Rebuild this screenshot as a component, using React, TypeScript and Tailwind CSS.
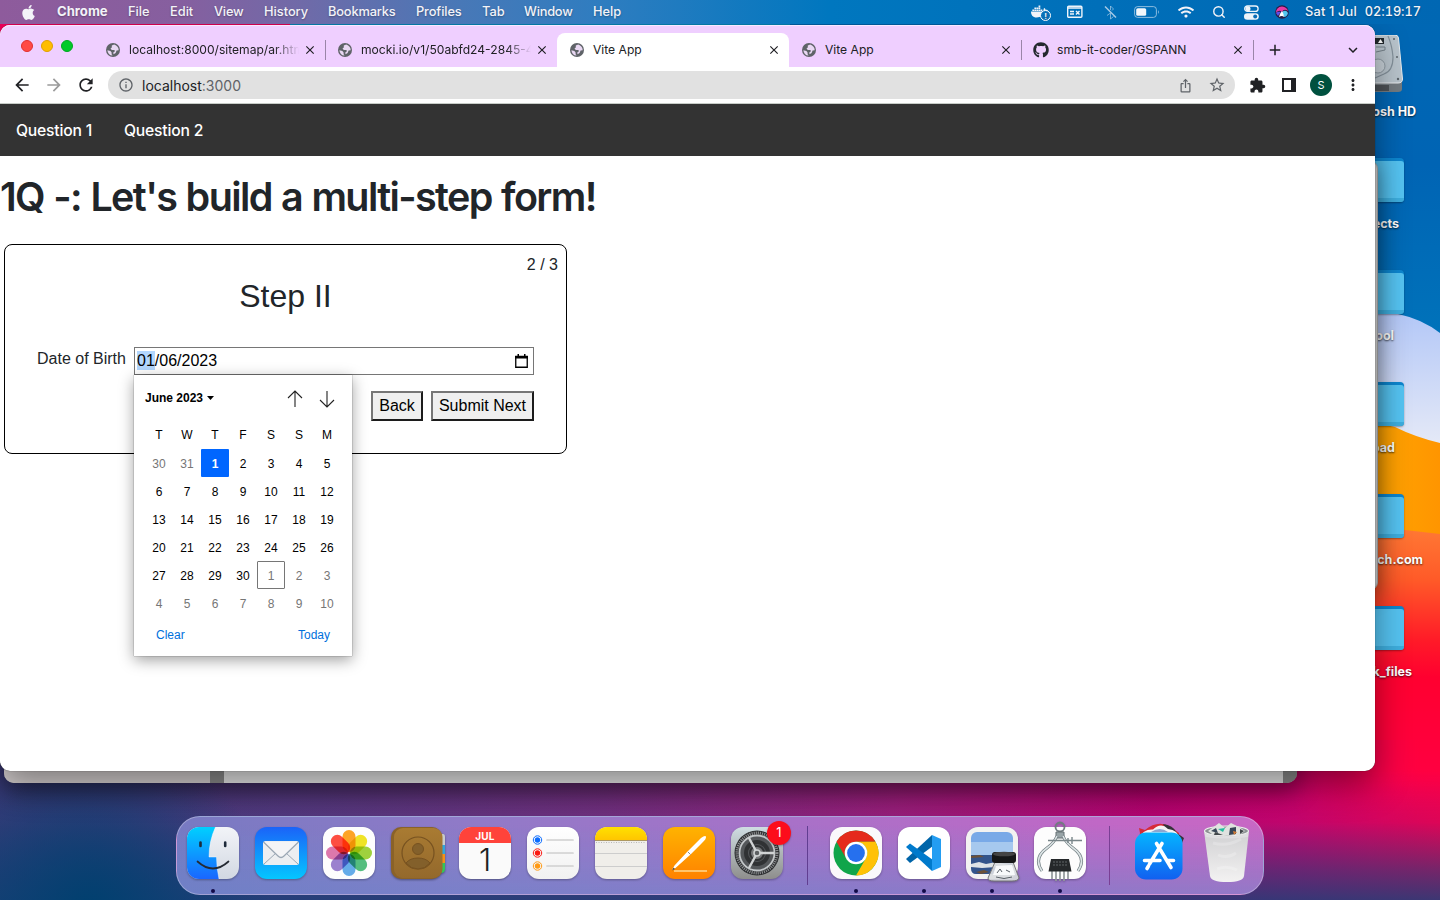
import React from "react";
import { FaApple, FaDocker, FaGithub, FaWifi } from "react-icons/fa";
import {
  MdArrowBack, MdArrowForward, MdRefresh, MdInfoOutline, MdIosShare, MdStarBorder,
  MdExtension, MdMoreVert, MdAdd, MdExpandMore, MdClose,
} from "react-icons/md";
import { Search } from "lucide-react";

const ui = "font-['Inter','Liberation_Sans',sans-serif]";
const arial = "font-['Liberation_Sans',Arial,sans-serif]";

function Wallpaper() {
  return (
    <svg className="absolute inset-0" width="1440" height="900" viewBox="0 0 1440 900">
      <defs>
        <linearGradient id="w-base" x1="0" x2="1">
          <stop offset="0" stopColor="#413a7a" />
          <stop offset=".2" stopColor="#55387e" />
          <stop offset=".42" stopColor="#742e7e" />
          <stop offset=".62" stopColor="#9e1c7a" />
          <stop offset=".8" stopColor="#bc006e" />
          <stop offset=".9" stopColor="#d0006c" />
          <stop offset="1" stopColor="#ee0054" />
        </linearGradient>
        <linearGradient id="w-low" x1="0" x2="0" y1="780" y2="900" gradientUnits="userSpaceOnUse">
          <stop offset="0" stopColor="#1d4078" stopOpacity="0" />
          <stop offset=".35" stopColor="#1d4078" stopOpacity=".08" />
          <stop offset=".75" stopColor="#1d4078" stopOpacity=".58" />
          <stop offset="1" stopColor="#1d4078" stopOpacity=".85" />
        </linearGradient>
        <radialGradient id="w-left" cx="90" cy="910" r="180" gradientUnits="userSpaceOnUse">
          <stop offset="0" stopColor="#00406f" />
          <stop offset="1" stopColor="#00406f" stopOpacity="0" />
        </radialGradient>
        <linearGradient id="w-right" x1="0" x2="0" y1="525" y2="830" gradientUnits="userSpaceOnUse">
          <stop offset="0" stopColor="#ff7a35" />
          <stop offset=".18" stopColor="#ff5a28" />
          <stop offset=".38" stopColor="#ff1a28" />
          <stop offset=".5" stopColor="#ff0030" />
          <stop offset=".8" stopColor="#ff0040" />
          <stop offset="1" stopColor="#ee0054" stopOpacity="0" />
        </linearGradient>
        <linearGradient id="w-fade" x1="1290" x2="1420" y1="0" y2="0" gradientUnits="userSpaceOnUse">
          <stop offset="0" stopColor="#000" />
          <stop offset="1" stopColor="#fff" />
        </linearGradient>
        <mask id="w-mask">
          <rect x="1290" y="740" width="150" height="160" fill="url(#w-fade)" />
          <rect x="1340" y="500" width="100" height="240" fill="#fff" />
        </mask>
        <linearGradient id="w-blue" x1="0" x2="0" y1="0" y2="330" gradientUnits="userSpaceOnUse">
          <stop offset="0" stopColor="#0068b4" />
          <stop offset=".5" stopColor="#0064b4" />
          <stop offset="1" stopColor="#0072ba" />
        </linearGradient>
        <linearGradient id="w-lav" x1="0" x2="0" y1="315" y2="440" gradientUnits="userSpaceOnUse">
          <stop offset="0" stopColor="#b4c8f7" />
          <stop offset="1" stopColor="#e3e8f7" />
        </linearGradient>
        <linearGradient id="w-org" x1="0" x2="1">
          <stop offset="0" stopColor="#ffae00" />
          <stop offset="1" stopColor="#ff9500" />
        </linearGradient>
      </defs>
      <rect width="1440" height="900" fill="url(#w-base)" />
      <rect width="292" height="40" fill="#f3005c" />
      <rect x="290" width="500" height="40" fill="#078cc2" />
      <rect x="790" width="650" height="400" fill="url(#w-blue)" />
      <path d="M1340 305 L1398 314 Q1422 319 1440 333 V480 H1340Z" fill="url(#w-lav)" />
      <path d="M1340 415 L1395 427 Q1415 437 1440 443 V560 H1340Z" fill="url(#w-org)" />
      <path d="M1290 529 L1405 530 L1440 534 V830 H1290Z" fill="url(#w-right)" mask="url(#w-mask)" />
      <rect y="780" width="1440" height="120" fill="url(#w-low)" />
      <rect y="700" width="300" height="200" fill="url(#w-left)" />
    </svg>
  );
}

function HardDrive() {
  return (
    <svg width="70" height="60" viewBox="0 0 70 60">
      <path d="M10 46 H62 V54 Q62 57 58 57 H14 Q10 57 10 54Z" fill="#747b80" />
      <path d="M12 0 H55 Q58 0 58.500 3 L62.500 44 Q62.500 48 58 48 H10Z" fill="#b9c4cc" stroke="#e9edf0" strokeWidth="1" />
      <rect x="34" y="3" width="10" height="6" fill="#22282c" />
      <path d="M38 8 l2.500 -4 l2.500 4z" fill="#fff" />
      <path d="M36 12 H45 V15 L36 17" fill="none" stroke="#77838c" />
      <path d="M48 1 Q52 10 53 22 Q53 36 44 39 L35 43" fill="none" stroke="#84919b" strokeWidth="1.200" />
      <circle cx="38" cy="31" r="7" fill="#c8d1d8" stroke="#8f9ba4" />
      <circle cx="54" cy="4" r="1" fill="#5c656b" />
      <circle cx="57" cy="22" r="1" fill="#5c656b" />
      <circle cx="58" cy="44" r="1.200" fill="#5c656b" />
      <path d="M36 50v6M38 50v6M40 50v6M42 50v6M44 50v6M46 50v6M48 50v6" stroke="#26292b" />
    </svg>
  );
}

function Folder() {
  return (
    <div className="h-[44px] w-[64px] rounded-[4px] bg-[#0d86cf] pt-[3px] shadow-[0_1px_2px_rgba(0,0,0,.35)]">
      <div className="h-[41px] rounded-[3px] border-b-4 border-[#3eaede] bg-[#55c3f1]" />
    </div>
  );
}

const labels = [
  { t: "osh HD", c: "pr-[24px]" },
  { t: "ects", c: "pr-[41px]" },
  { t: "ool", c: "pr-[46px]" },
  { t: "oad", c: "pr-[45px]" },
  { t: "ech.com", c: "pr-[17px]" },
  { t: "k_files", c: "pr-[28px]" },
];

function DesktopItems() {
  return (
    <div className="absolute left-[1340px] top-[24px] flex w-[100px] flex-col">
      {labels.map((l, i) => (
        <div key={l.t} className="flex h-28 flex-col">
          <div className={i === 0 ? "flex h-[80px] pt-[11px]" : "flex h-[80px] pt-[22px]"}>
            {i === 0 ? <HardDrive /> : <Folder />}
          </div>
          <div className={`${l.c} text-right text-[12.5px] font-bold leading-4 whitespace-nowrap text-white [text-shadow:0_1px_2px_rgba(0,0,0,.7)]`}>
            {l.t}
          </div>
        </div>
      ))}
    </div>
  );
}

const menus = [
  { t: "Chrome", c: "w-[71px] font-bold text-[13.1px]" },
  { t: "File", c: "w-[42px]" },
  { t: "Edit", c: "w-[44px]" },
  { t: "View", c: "w-[50px] tracking-[-.2px]" },
  { t: "History", c: "w-[64px]" },
  { t: "Bookmarks", c: "w-[88px] tracking-[-.15px]" },
  { t: "Profiles", c: "w-[66px] tracking-[-.1px]" },
  { t: "Tab", c: "w-[42px]" },
  { t: "Window", c: "w-[69px] tracking-[-.2px]" },
  { t: "Help", c: "w-[60px]" },
];

function MenuBar() {
  return (
    <div className="absolute left-0 top-0 flex h-6 w-[1440px] items-center bg-[linear-gradient(90deg,#8e5b9c_0,#865f9f_180px,#706aa8_300px,#4878b7_460px,#2f7dc0_600px,#0077bf_830px,#006fb9_1100px,#0067b3_1440px)] text-[12.8px] font-medium text-[#f3f3f8] [text-shadow:0_1px_2px_rgba(0,0,0,.3)]">
      <div className="flex w-[57px] pl-[20px]"><FaApple size={17} /></div>
      {menus.map((m) => (
        <div key={m.t} className={`${m.c} shrink-0 whitespace-nowrap`}>{m.t}</div>
      ))}
      <div className="ml-auto flex items-center pr-[19px]">
        <div className="relative mr-[16px] h-5 w-[20px]">
          <FaDocker size={17} className="absolute left-0 top-[1px]" />
          <div className="absolute left-[9px] top-[8px] flex size-[11px] items-center justify-center rounded-full border-[1.5px] border-white bg-[#0a71b8] text-[8px] font-bold leading-none">!</div>
        </div>
        <svg width="16" height="14" viewBox="0 0 16 14" className="mr-[20px]">
          <rect x=".7" y="1.200" width="14.200" height="11" rx="1" fill="none" stroke="#eef4fa" strokeWidth="1.400" />
          <path d="M1 3H15M3 6.500H7M3 9H7M9 6L12.500 9.500M12.500 6L9 9.500" stroke="#eef4fa" strokeWidth="1.400" />
        </svg>
        <svg width="15" height="15" viewBox="0 0 15 15" fill="none" stroke="#a9cbe6" className="mr-[16px]">
          <path d="M2 1.500L13 12.500" strokeWidth="1.400" />
          <path d="M7.500 5V1L10.500 4L9 5.500M4 10.500L7.500 8V14L10.500 11.500" strokeWidth=".9" opacity=".8" />
        </svg>
        <svg width="26" height="12" viewBox="0 0 26 12" className="mr-[18px]">
          <rect x=".6" y=".6" width="21.800" height="10.800" rx="3" fill="none" stroke="#b9d6ec" strokeOpacity=".75" />
          <rect x="2.200" y="2.200" width="10" height="7.600" rx="1.600" fill="#f2f7fb" />
          <path d="M24 4 Q25.500 6 24 8Z" fill="#b9d6ec" />
        </svg>
        <FaWifi size={16} className="mr-[18px]" />
        <Search size={14} strokeWidth={2.4} className="mr-[18px]" />
        <svg width="15" height="15" viewBox="0 0 15 15" className="mr-[16px]">
          <rect x=".7" y="1" width="13.400" height="5.400" rx="2.700" fill="none" stroke="#eef4fa" strokeWidth="1.300" />
          <circle cx="4" cy="3.700" r="2.500" fill="#eef4fa" />
          <rect x="0" y="8.200" width="14.800" height="6.600" rx="3.300" fill="#eef4fa" />
          <circle cx="11.200" cy="11.500" r="2" fill="#0a6cb6" />
        </svg>
        <svg width="14" height="14" viewBox="0 0 14 14" className="mr-[16px]">
          <circle cx="7" cy="7" r="6.800" fill="#2a1d45" />
          <path d="M1 8 Q1 2 7 1.500 Q12 2 13 6 Q9 3 7 7 Q4 4 1 8Z" fill="#e83aa6" />
          <path d="M7 7 Q11 4 13 8 Q12 12 9 12Z" fill="#54c6ef" />
          <path d="M7 6 Q9 9 9 12 Q7 10 4 12 Q5 8 7 6Z" fill="#fff" />
          <path d="M1 8 Q3 6 6 7 Q4 9 3 11Z" fill="#5c50e8" />
        </svg>
        <div className="flex gap-[8px] text-[12.8px] leading-6 whitespace-nowrap">
          <span className="tracking-[.15px]">Sat 1 Jul</span>
          <span className="tracking-[-.05px] tabular-nums">02:19:17</span>
        </div>
      </div>
    </div>
  );
}

function GlobeIcon() {
  return (
    <svg width="14" height="14" viewBox="0 0 14 14" className="shrink-0">
      <circle cx="7" cy="7" r="7" fill="#5f6368" />
      <path d="M8.200 1.600 L5.800 2.600 V4.400 L4.500 5.600 L5.800 7 H8.600 V8.800 L7.200 9.600 L7.600 11.200 L9.600 10 L10.600 7.600 L12.700 7.200 Q12.600 3.200 8.200 1.600Z M1.400 7.200 L4.400 8 L5.600 9.400 V11.200 L6.600 12.600 Q1.800 12.200 1.400 7.200Z" fill="#e9d8f3" />
    </svg>
  );
}

function Tab({ title, active, github, line, fade }: { title: string; active?: boolean; github?: boolean; line?: boolean; fade?: boolean }) {
  return (
    <div className={`relative flex h-[34px] w-[232px] shrink-0 items-center pl-[13px] ${active ? "rounded-t-[8px] bg-white" : ""}`}>
      {github ? <FaGithub size={16} color="#24292f" className="-ml-px -mr-px shrink-0" /> : <GlobeIcon />}
      <div className={`ml-[9px] w-[172px] whitespace-nowrap text-[12.1px] text-[#202124] ${fade ? "[mask-image:linear-gradient(90deg,#000_145px,transparent_170px)]" : ""}`}>{title}</div>
      <MdClose size={14} color="#1f1f24" className="ml-[2px] shrink-0" />
      {line && <div className="absolute right-[-1px] top-[7px] h-[20px] w-px bg-[#9a85a8]" />}
    </div>
  );
}

function Calendar() {
  const days = [30, 31, ...Array.from({ length: 30 }, (_, i) => i + 1), ...Array.from({ length: 10 }, (_, i) => i + 1)];
  return (
    <div className={`${arial} absolute left-[134px] top-[350px] h-[281px] w-[218px] bg-white px-[11px] text-[12px] text-black shadow-[0_4px_14px_rgba(0,0,0,.38),0_0_1px_rgba(0,0,0,.6)]`}>
      <div className="flex h-[46px] items-center">
        <div className="flex items-center font-bold">June 2023
          <svg width="7" height="4" viewBox="0 0 7 4" className="ml-[4px]"><path d="M0 0H7L3.500 4Z" /></svg>
        </div>
        <div className="-mr-[2px] ml-auto mt-[2px] flex">
          {[0, 1].map((i) => (
            <svg key={i} width="32" height="18" viewBox="0 0 32 18" fill="none" stroke="#222" strokeWidth="1.100" className={i ? "rotate-180" : ""}>
              <path d="M16 1V17M9 8L16 1L23 8" />
            </svg>
          ))}
        </div>
      </div>
      <div className="grid h-[28px] grid-cols-[repeat(7,28px)] items-center text-center">
        {["T", "W", "T", "F", "S", "S", "M"].map((d, i) => <div key={i}>{d}</div>)}
      </div>
      <div className="grid grid-cols-[repeat(7,28px)] text-center leading-[28px]">
        {days.map((d, i) => (
          <div key={i} className={i === 2 ? "h-[28px] rounded-[1px] bg-[#0066ff] pt-px font-bold text-white" : i === 32 ? "h-[28px] rounded-[1px] border border-[#767676] leading-[28px] text-[#767676]" : i < 2 || i > 31 ? "h-[28px] pt-px text-[#767676]" : "h-[28px] pt-px"}>{d}</div>
        ))}
      </div>
      <div className="flex justify-between px-[11px] pt-[9px] text-[#0070dc]">
        <span>Clear</span><span>Today</span>
      </div>
    </div>
  );
}

function FormCard() {
  return (
    <div className={`${arial} ml-1 mt-[24px] h-[210px] w-[563px] rounded-[8px] border border-black text-[16px] text-[#212529]`}>
      <div className="pr-[8px] pt-[8px] text-right leading-6">2 / 3</div>
      <div className="text-center text-[32px] leading-[38px]">Step II</div>
      <div className="mt-[32px] flex pl-[32px]">
        <div className="w-[97px] leading-[24px] whitespace-nowrap">Date of Birth</div>
        <div className="flex h-[28px] w-[400px] items-center border border-[#767676] bg-white pl-[2px] pr-[5px] text-black">
          <div className="leading-[20px]"><span className="bg-[#b3d7fe] py-px">01</span>/06/2023</div>
          <svg width="13" height="14" viewBox="0 0 13 14" className="ml-auto">
            <path d="M.75 2.500H12.250V13.250H.75Z" fill="none" stroke="#000" strokeWidth="1.300" />
            <path d="M0 2H13V4.500H0ZM2.500 0H4V3H2.500ZM9 0H10.500V3H9Z" />
          </svg>
        </div>
      </div>
      <div className="mt-[16px] flex justify-end gap-2 pr-[32px] text-black">
        <button className="h-[30px] w-[52px] border-2 border-b-[#1c1c1c] border-l-[#767676] border-r-[#1c1c1c] border-t-[#767676] bg-[#efefef]">Back</button>
        <button className="h-[30px] w-[103px] border-2 border-b-[#1c1c1c] border-l-[#767676] border-r-[#1c1c1c] border-t-[#767676] bg-[#efefef] whitespace-nowrap">Submit Next</button>
      </div>
    </div>
  );
}

function BrowserWindow() {
  return (
    <div className="absolute left-0 top-[25px] flex h-[746px] w-[1375px] flex-col rounded-[10px] bg-white shadow-[0_14px_34px_rgba(0,0,0,.42),0_0_1px_rgba(0,0,0,.8)]">
      <div className="flex h-[42px] items-end rounded-t-[10px] bg-[#efcfff] shadow-[inset_0_1px_0_#f8e8ff]">
        <div className="flex h-[42px] w-[93px] shrink-0 items-center gap-2 pl-[21px]">
          <div className="size-3 rounded-full border border-[#e0302e] bg-[#ff4a46]" />
          <div className="size-3 rounded-full border border-[#dfa000] bg-[#ffbd00]" />
          <div className="size-3 rounded-full border border-[#00a820] bg-[#00ca28]" />
        </div>
        <Tab title="localhost:8000/sitemap/ar.htm" line fade />
        <Tab title="mocki.io/v1/50abfd24-2845-4" fade />
        <Tab title="Vite App" active />
        <Tab title="Vite App" line />
        <Tab title="smb-it-coder/GSPANN" github line />
        <div className="flex h-[34px] flex-1 items-center justify-between pl-[13px] pr-[13px]">
          <MdAdd size={18} color="#1f1f24" />
          <MdExpandMore size={18} color="#1f1f24" />
        </div>
      </div>
      <div className="flex h-[36px] shrink-0 items-center pl-[6px] text-[#202124]">
        <div className="flex w-8 justify-center"><MdArrowBack size={20} /></div>
        <div className="flex w-8 justify-center text-[#9b9b9b]"><MdArrowForward size={20} /></div>
        <div className="flex w-8 justify-center"><MdRefresh size={20} /></div>
        <div className="ml-[6px] flex h-[28px] w-[1127px] items-center rounded-full bg-[#e1e1e1] pl-[10px] pr-[2px]">
          <MdInfoOutline size={16} color="#5f6368" />
          <div className="ml-[8px] text-[14px]">localhost<span className="text-[#5f6368]">:3000</span></div>
          <div className="ml-auto flex items-center text-[#5f6368]">
            <div className="flex w-8 justify-center"><MdIosShare size={15} /></div>
            <div className="flex w-8 justify-center"><MdStarBorder size={18} /></div>
          </div>
        </div>
        <div className="ml-[6px] flex items-center">
          <div className="flex w-8 justify-center"><MdExtension size={17} /></div>
          <div className="flex w-8 justify-center"><div className="h-[14px] w-[14px] border-2 border-r-[5px] border-[#202124]" /></div>
          <div className="flex w-8 justify-center"><div className="flex size-[22px] items-center justify-center rounded-full bg-[#00513f] text-[11px] text-white">S</div></div>
          <div className="flex w-8 justify-center"><MdMoreVert size={18} /></div>
        </div>
      </div>
      <div className="flex h-[53px] shrink-0 items-center gap-[32px] border-t border-[#c8cdc8] bg-[#333] pl-4 pt-[2px] text-[15.7px] font-medium tracking-[-.2px] text-white">
        <span className="w-[76px] whitespace-nowrap">Question 1</span><span className="whitespace-nowrap">Question 2</span>
      </div>
      <h1 className="mt-[16px] h-[48px] text-[39.5px] font-semibold leading-[51px] tracking-[-1.62px] [word-spacing:1px] whitespace-nowrap text-[#212529]">1Q -: Let's build a multi-step form!</h1>
      <FormCard />
      <Calendar />
    </div>
  );
}

function Tile({ bg, children }: { bg: string; children?: React.ReactNode }) {
  return (
    <svg width="52" height="52" viewBox="0 0 52 52" className="overflow-visible drop-shadow-[0_1px_1px_rgba(0,0,0,.3)]">
      <rect width="52" height="52" rx="12" fill={bg} />
      {children}
    </svg>
  );
}

function DockDefs() {
  const g: [string, string, string][] = [
    ["g-mail", "#1b63f8", "#05c6ff"], ["g-white", "#ffffff", "#f1f1f1"], ["g-pages", "#ffb300", "#ff8200"],
    ["g-prefs", "#cfdde2", "#8e8e8c"], ["g-store", "#05b4ff", "#1160f0"], ["g-fl", "#00d0ff", "#1a66ff"],
    ["g-fr", "#f2f4f8", "#d2d8e2"], ["g-brown", "#a97b32", "#94692c"], ["g-yel", "#ffe100", "#ffc500"], ["g-bin", "#d0d0d2", "#f3f2f2"],
  ];
  return (
    <svg width="0" height="0" className="absolute">
      <defs>
        {g.map(([id, a, b]) => (
          <linearGradient key={id} id={id} x1="0" x2="0" y1="0" y2="1"><stop stopColor={a} /><stop offset="1" stopColor={b} /></linearGradient>
        ))}
        <clipPath id="tile"><rect width="52" height="52" rx="12" /></clipPath>
      </defs>
    </svg>
  );
}

const Finder = () => (
  <Tile bg="url(#g-fr)">
    <g clipPath="url(#tile)">
      <path d="M0 0H28.500Q22 14 22 30H29.500Q29.500 41 32 52H0Z" fill="url(#g-fl)" />
      <path d="M28.500 0Q22 14 22 30H29.500Q29.500 41 32 52" fill="none" stroke="#fff" strokeOpacity=".55" strokeWidth=".8" />
    </g>
    <path d="M13.500 15.500V19M38.200 15.500V19" stroke="#1d2a3a" strokeWidth="2.600" strokeLinecap="round" />
    <path d="M10.500 34.500Q26 48.500 41.500 34.500" fill="none" stroke="#252a33" strokeWidth="1.700" strokeLinecap="round" />
  </Tile>
);

const Mail = () => (
  <Tile bg="url(#g-mail)">
    <rect x="8" y="14" width="36" height="24" rx="2.500" fill="#eceef1" />
    <path d="M9 37L21 26M43 37L31 26" stroke="#9ba7b4" strokeWidth="1" />
    <path d="M8.500 15L23 29Q26 32 29 29L43.500 15" fill="#f4f4f6" stroke="#9ba7b4" strokeWidth="1.200" />
  </Tile>
);

const Photos = () => (
  <Tile bg="#fdfdfd">
    {["#ff9500", "#eee000", "#8fcb1b", "#37b56a", "#4ba0e8", "#8b6cc8", "#d862a0", "#ff2f20"].map((c, i) => (
      <rect key={c} x="19.500" y="3" width="13" height="22" rx="6.500" fill={c} fillOpacity=".85" transform={`rotate(${i * 45} 26 26)`} className="mix-blend-multiply" />
    ))}
  </Tile>
);

const Contacts = () => (
  <svg width="54" height="52" viewBox="0 0 54 52" className="drop-shadow-[0_1px_1px_rgba(0,0,0,.4)]">
    <path d="M48 7H52Q54 7 54 10V18H48Z" fill="#c9ccca" /><path d="M48 18H54V27H48Z" fill="#31a6dc" />
    <path d="M48 27H54V36H48Z" fill="#f49018" /><path d="M48 36H54V42Q54 46 50 46H48Z" fill="#32c659" />
    <rect y="0" width="51" height="52" rx="10" fill="#8a6228" />
    <rect x="3" y="1" width="48.500" height="50" rx="9" fill="url(#g-brown)" />
    <circle cx="27" cy="26" r="16" fill="none" stroke="#775220" strokeWidth="1.200" />
    <circle cx="27" cy="22" r="5.500" fill="#83602b" stroke="#775220" />
    <path d="M15 36Q19 31 27 31Q35 31 39 36Q34 42 27 42Q20 42 15 36Z" fill="#83602b" stroke="#775220" />
  </svg>
);

const CalendarApp = () => (
  <div className="flex h-[52px] w-[52px] flex-col items-center overflow-hidden rounded-[12px] bg-[#fafafa] shadow-[0_1px_2px_rgba(0,0,0,.35)]">
    <div className="flex h-[16px] w-full shrink-0 items-center justify-center bg-[#ff433a] pt-[2px] text-[10px] font-bold tracking-[.2px] text-white">JUL</div>
    <div className="text-[31px] font-light leading-[33px] text-[#202020]">1</div>
  </div>
);

const Reminders = () => (
  <Tile bg="url(#g-white)">
    {["#0a6cff", "#fb1a12", "#ff9a14"].map((c, i) => (
      <g key={c}>
        <circle cx="10.500" cy={13 + i * 13} r="4.200" fill="none" stroke={c} strokeWidth="1" />
        <circle cx="10.500" cy={13 + i * 13} r="2.700" fill={c} />
        <path d={`M20 ${13 + i * 13}H46`} stroke="#cfcfcf" strokeWidth="1.700" strokeLinecap="round" />
      </g>
    ))}
  </Tile>
);

const Notes = () => (
  <Tile bg="#f0eeea">
    <g clipPath="url(#tile)"><rect width="52" height="13" fill="url(#g-yel)" /></g>
    <path d="M0 13.500H52" stroke="#ad9860" /><path d="M1 15.500H51" stroke="#b8b8b8" strokeDasharray="1 1.500" />
    <path d="M0 26.500H52M0 39.500H52" stroke="#cdcdcd" />
  </Tile>
);

const Pages = () => (
  <Tile bg="url(#g-pages)">
    <path d="M11 44H44" stroke="#ffd890" strokeWidth="1.600" />
    <path d="M9 43L11.500 38.500L24 25L38 11Q42 8 43 9.500Q43.500 12 39 16L27 28L12.500 41Z" fill="#fff" />
    <path d="M25 25L27.500 27.500" stroke="#8a8a8a" /><path d="M9 43.500L10.500 40.500L12 42Z" fill="#4b4b4b" />
  </Tile>
);

const Prefs = () => (
  <div className="relative">
    <Tile bg="url(#g-prefs)">
      <circle cx="26" cy="26" r="22.500" fill="#2b2d2f" />
      <circle cx="26" cy="26" r="20" fill="none" stroke="#8b8d8f" strokeWidth="3" strokeDasharray="1.100 1" />
      <circle cx="26" cy="26" r="17.500" fill="#54575a" stroke="#c2c6c8" strokeWidth="1.800" />
      <circle cx="26" cy="26" r="11" fill="none" stroke="#303234" strokeWidth="4" />
      <circle cx="26" cy="26" r="7" fill="#77797b" stroke="#303234" strokeWidth="2" />
      <path d="M28 26H43M25 24L18 11M25 28L18 41" stroke="#d0d3d4" strokeWidth="2.400" />
      <circle cx="26" cy="26" r="3" fill="#5d6062" stroke="#d0d3d4" strokeWidth="1.500" />
    </Tile>
    <div className="absolute left-[36px] top-[-6px] flex size-[24px] items-center justify-center rounded-full bg-[#fc0d1b] text-[13px] text-white shadow-[0_1px_2px_rgba(0,0,0,.3)]">1</div>
  </div>
);

const Chrome = () => (
  <Tile bg="#faf8fb">
    <circle cx="26" cy="26" r="22.500" fill="#10a54a" />
    <path d="M6.500 14.750A22.500 22.500 0 0 1 45.500 14.750H26A11.250 11.250 0 0 0 16.250 31.600Z" fill="#e52a1c" />
    <path d="M45.500 14.750A22.500 22.500 0 0 1 26 48.500L35.750 31.600A11.250 11.250 0 0 0 26 14.750Z" fill="#ffc107" />
    <circle cx="26" cy="26" r="11.300" fill="#fff" /><circle cx="26" cy="26" r="8.900" fill="#2670ee" />
  </Tile>
);

const Code = () => (
  <Tile bg="#fff">
    <path d="M34 8L8 32L12 36L35 19Z" fill="#0065a9" />
    <path d="M34 44L8 20L12 16.500L35 33Z" fill="#007acc" />
    <path d="M34 8L43 12V40L34 44V8Z" fill="#239df2" />
  </Tile>
);

const Preview = () => (
  <Tile bg="#f3f2f1">
    <rect x="5" y="5" width="42" height="42" rx="6" fill="#79a9e7" />
    <path d="M5 15H47V28H5Z" fill="#a6c8ee" /><path d="M5 28H47V47H10Q5 47 5 41Z" fill="#34558b" />
    <path d="M5 37L13 35L20 37L30 35L47 39V42L30 40L16 41L5 40Z" fill="#dfe4e6" />
    <path d="M5 29L14 28L18 30L5 31ZM10 45L18 43L23 45L15 47Z" fill="#6c5138" />
    <path d="M29 35H47L53 51Q52 54 46 54H28Q22 54 22 51Z" fill="#d9dcdf" fillOpacity=".92" stroke="#777" />
    <path d="M30 39L46 38L49 48H27Z" fill="#f8fafb" /><path d="M31 46L34 42L36 45M40 43L44 45M30 50Q38 53 46 50" fill="none" stroke="#596067" />
    <rect x="26" y="25" width="24" height="11" rx="3" fill="#161718" /><ellipse cx="38" cy="27" rx="11" ry="2.300" fill="#444" />
  </Tile>
);

const SysInfo = () => (
  <Tile bg="#fdfdfd">
    <circle cx="26" cy="0" r="4.500" fill="none" stroke="#707c80" strokeWidth="1.800" />
    <path d="M22 5H30V11H22Z" fill="#98a4a7" stroke="#667175" />
    <path d="M23 9Q20 16 13 21Q-1 31 8 44M29 9Q32 16 39 21Q53 31 44 44" fill="none" stroke="#6f7c80" strokeWidth="3" />
    <path d="M23 9Q20 16 13 21Q-1 31 8 44M29 9Q32 16 39 21Q53 31 44 44" fill="none" stroke="#dce4e5" strokeWidth="1.600" />
    <path d="M14 13.500H48M38 10V17M34 11V16" stroke="#788589" strokeWidth="1.400" />
    <path d="M18 44V52M22 44V54M26 44V54M30 44V54M34 44V52" stroke="#92989b" strokeWidth="1.700" />
    <path d="M17 32H35L37.500 44.500H14.500Z" fill="#25282a" /><path d="M19 35H33M19 38H34" stroke="#606466" strokeDasharray="2 1" />
  </Tile>
);

const AppStore = () => (
  <svg width="52" height="56" viewBox="0 0 52 56" className="overflow-visible">
    <path d="M5 9L4 4L10 6Q23 -5 36 3L44 9V14H4Z" fill="#d72a37" />
    <path d="M28 0Q38 1 42 9L49 14L47 19H38Z" fill="#34333b" />
    <path d="M4 14Q8 5 18 5.500Q26 -2 33 5Q43 6 45 15Z" fill="#f4f3f5" />
    <path d="M16 8Q25 2 33 8Z" fill="#8fa6cf" />
    <rect x="0" y="8.500" width="47.500" height="47" rx="11" fill="url(#g-store)" />
    <path d="M27 19.500L14.500 40M21.500 19.500L36 43.500M9.500 36.500H25M33 36.500H38.500M13.500 42L12 44.500" stroke="#fff" strokeWidth="3.600" strokeLinecap="round" />
  </svg>
);

const Trash = () => (
  <svg width="48" height="62" viewBox="0 0 48 62" className="overflow-visible">
    <path d="M1 8H46L41 53Q40 59 24 59Q8 59 7 53Z" fill="url(#g-bin)" />
    <ellipse cx="23.500" cy="8" rx="22" ry="5" fill="#8d9294" stroke="#eee" strokeWidth="1.200" />
    <path d="M5 8L12 3L16 0L22 5L28 0L36 4L42 8L36 12L27 12L20 13L9 11Z" fill="#dfe2df" />
    <path d="M8 8L13 5L15 10ZM27 5L33 4L33 11L26 12Z" fill="#384657" /><path d="M15 6L22 5L20 9Z" fill="#23bd9e" />
    <path d="M30 8L34 9L31 12Z" fill="#d27b36" /><path d="M12 9L20 12L11 12ZM37 6L41 8L37 11Z" fill="#42474b" />
    <path d="M1.500 10Q22 18 45.500 10L45 14Q24 17 2.500 14Z" fill="#e6e6e7" fillOpacity=".6" />
    <path d="M10 20Q24 24 38 16M15 32Q24 36 33 30M14 46Q24 42 34 47" fill="none" stroke="#fff" strokeOpacity=".22" strokeWidth="3" />
  </svg>
);

function DockItem({ children, run }: { children: React.ReactNode; run?: boolean }) {
  return (
    <div className="relative h-[52px] w-[52px] shrink-0">
      {children}
      {run && <div className="absolute left-[24px] top-[62px] size-1 rounded-full bg-[#120a48]" />}
    </div>
  );
}

function Dock() {
  return (
    <div className="absolute left-[176px] top-[816px] flex h-[79px] w-[1088px] gap-4 rounded-[24px] border border-white/30 bg-[linear-gradient(0deg,rgba(104,134,202,.55),rgba(104,134,202,0)_90%),linear-gradient(90deg,#787ac2,#917ac8_28%,#ab70c8_60%,#c068c6_85%,#c868c4)] pl-[10px] pt-[10px]">
      <DockDefs />
      <DockItem run><Finder /></DockItem>
      <DockItem><Mail /></DockItem>
      <DockItem><Photos /></DockItem>
      <DockItem><Contacts /></DockItem>
      <DockItem><CalendarApp /></DockItem>
      <DockItem><Reminders /></DockItem>
      <DockItem><Notes /></DockItem>
      <DockItem><Pages /></DockItem>
      <DockItem><Prefs /></DockItem>
      <div className="ml-[8px] mr-[6px] mt-[-1px] h-[59px] w-px bg-[#613e91]" />
      <DockItem run><Chrome /></DockItem>
      <DockItem run><Code /></DockItem>
      <DockItem run><Preview /></DockItem>
      <DockItem run><SysInfo /></DockItem>
      <div className="ml-[7px] mr-[9px] mt-[-1px] h-[59px] w-px bg-[#7a3f95]" />
      <div className="-mt-[3px] w-[52px]"><AppStore /></div>
      <div className="-mt-[4px] w-[48px]"><Trash /></div>
    </div>
  );
}

export default function App() {
  return (
    <div className={`${ui} relative h-[900px] w-[1440px] overflow-hidden`}>
      <Wallpaper />
      <DesktopItems />
      <div className="absolute left-[1300px] top-[160px] h-[431px] w-[78px] rounded-[9px] border border-[#a5a5a5] bg-[#cfcfcf] shadow-[0_6px_20px_rgba(0,0,0,.35)]" />
      <div className="absolute left-[4px] top-[700px] flex h-[83px] w-[1293px] overflow-hidden rounded-[10px] bg-[#bebebe] shadow-[0_8px_24px_rgba(0,0,0,.4)]">
        <div className="w-[206px] bg-[#d8d2d2]" />
        <div className="w-[14px] bg-[#8c8c8c]" />
        <div className="flex-1 bg-[#eaeaea]" />
        <div className="w-[14px] bg-[#8c8c8c]" />
      </div>
      <BrowserWindow />
      <MenuBar />
      <Dock />
    </div>
  );
}
